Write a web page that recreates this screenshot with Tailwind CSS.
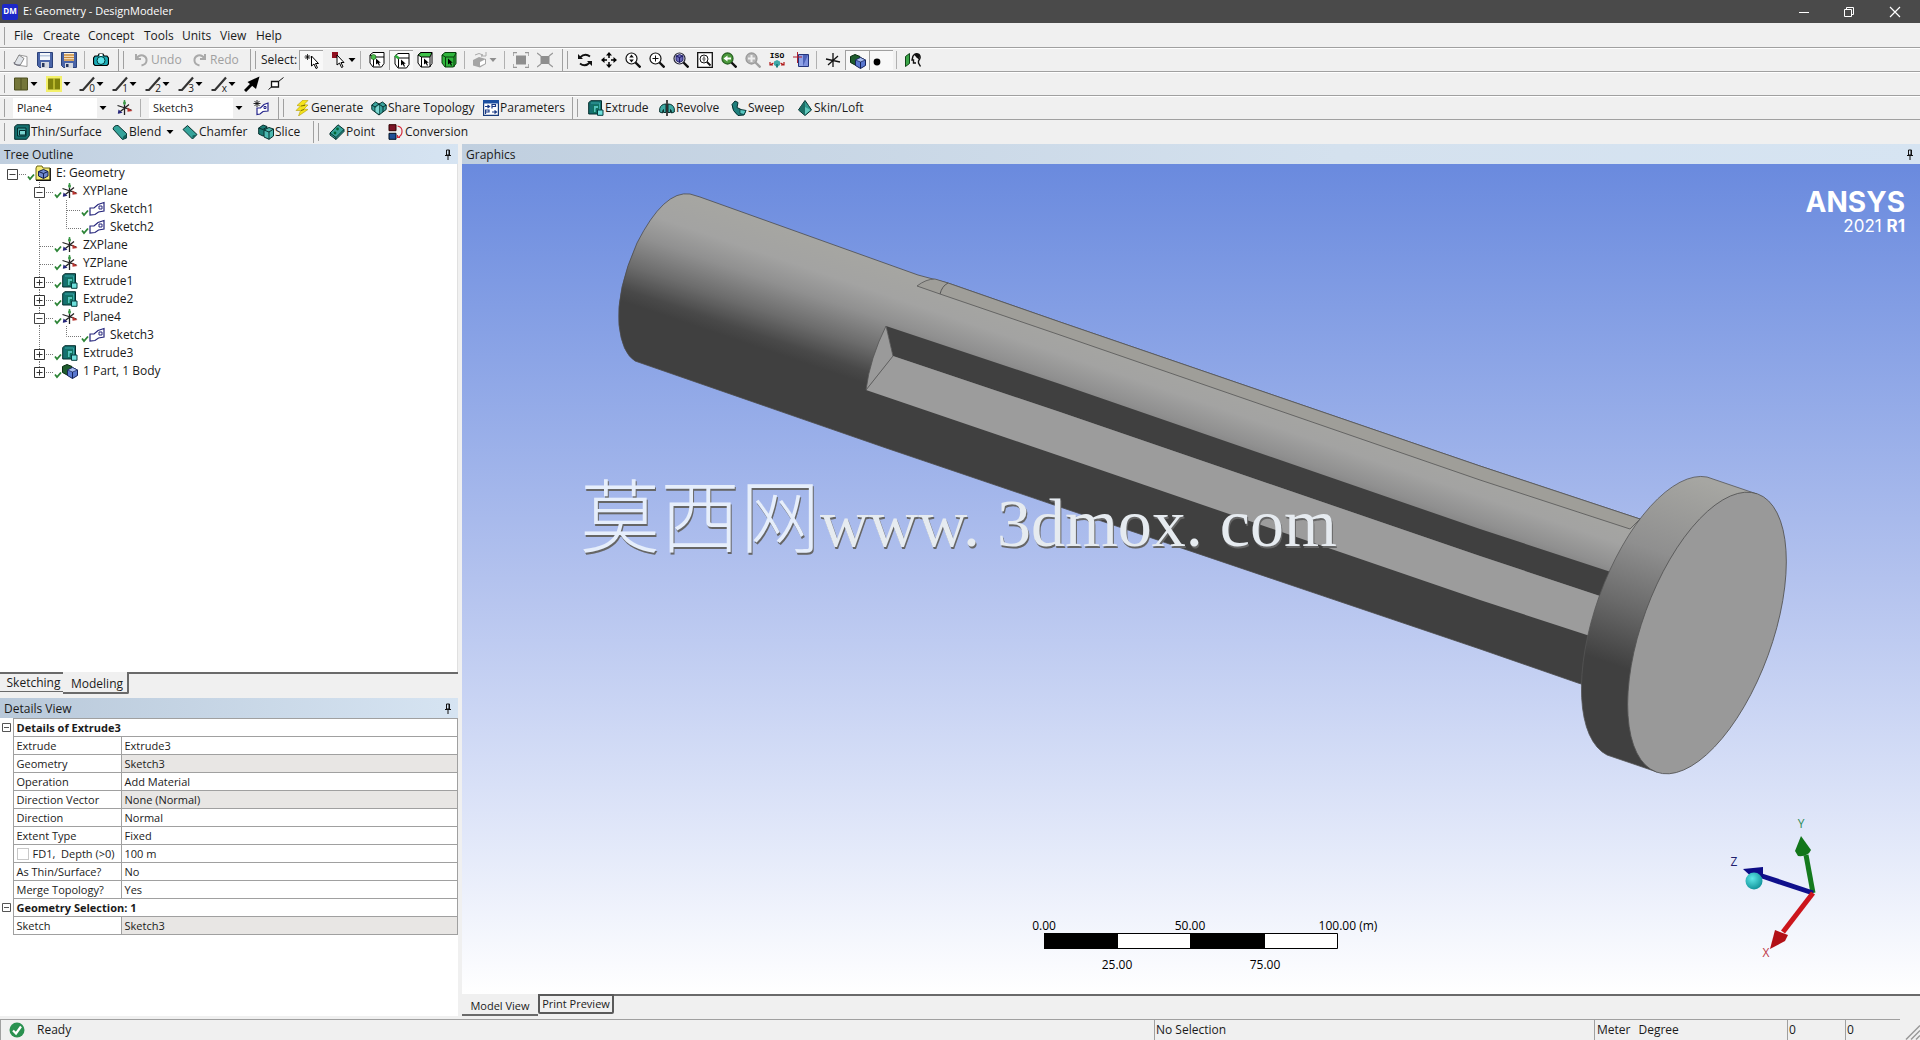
<!DOCTYPE html>
<html lang="en">
  <head>
    <meta charset="UTF-8" />
    <meta name="viewport" content="width=device-width, initial-scale=1.0" />
    <title>E: Geometry - DesignModeler</title>
    <script src="https://cdn.jsdelivr.net/npm/@tailwindcss/browser@4"></script>
  </head>
  <body
    class="flex h-screen flex-col overflow-hidden bg-[#f0f0f0] font-['Open_Sans','Noto_Sans_CJK_SC',sans-serif] text-xs text-[#1a1a1a]"
  >
    <!-- icon set -->
    <svg class="hidden">
      <symbol id="caret" viewBox="0 0 8 8"><path d="M0.5 2h7L4 6z" fill="#000" /></symbol>
      <symbol id="pin" viewBox="0 0 8 12">
        <path d="M2.5 1h3v5h-3zM1 6.5h6M4 7v4" fill="none" stroke="#111" /><path d="M4.5 1h1.5v5H4.500z" fill="#111" />
      </symbol>
      <symbol id="new" viewBox="0 0 16 16">
        <path d="M6 3l8 1.500v10l-7-1z" fill="#fff" stroke="#999" /><path d="M6 3L1 12l6 1.500 4-7z" fill="#dfe3e8" stroke="#8a8a8a" /><path d="M1 10q1 4 6 3" stroke="#667" fill="none" />
      </symbol>
      <symbol id="save" viewBox="0 0 16 16">
        <path d="M.5.5h15v15h-13l-2-2z" fill="#4a65a8" stroke="#2c4279" /><path d="M3 1h10v7H3z" fill="#f4f7fb" /><path d="M3 3h10v1.500H3z" fill="#b9c7dd" /><path d="M4 10h8v6H4z" fill="#d5d9e0" /><path d="M5 11h2.500v4H5z" fill="#26365c" />
      </symbol>
      <symbol id="saveas" viewBox="0 0 16 16">
        <path d="M.5.5h15v15h-13l-2-2z" fill="#4a65a8" stroke="#2c4279" /><path d="M3 1h10v8H3z" fill="#fff6e0" /><path d="M3 3h10M3 5.500h10M3 8h10" stroke="#c98a3a" stroke-width="1.300" /><path d="M4 11h8v5H4z" fill="#d5d9e0" /><path d="M5 12h2.500v3H5z" fill="#26365c" />
      </symbol>
      <symbol id="camera" viewBox="0 0 16 16">
        <path d="M2 4h3l1-2h4l1 2h3l1.500 2v6L14 13.500H2L.5 12V6z" fill="#19a9b4" stroke="#000" stroke-width="1.200" /><circle cx="8" cy="8.500" r="4" fill="#5fe4ea" stroke="#033" /><path d="M6.500 2h3v2h-3z" fill="#fff" />
      </symbol>
      <symbol id="undo" viewBox="0 0 16 16"><path d="M3 2v5h5M3.500 6.500Q6 2.500 10 3.500q4 1.500 3.500 5.500-.5 3.500-5 4.500" fill="none" stroke="#a9a9a9" stroke-width="2" /></symbol>
      <symbol id="redo" viewBox="0 0 16 16"><path d="M13 2v5H8M12.500 6.500Q10 2.500 6 3.500 2 5 2.500 9q.5 3.500 5 4.500" fill="none" stroke="#a9a9a9" stroke-width="2" /></symbol>
      <symbol id="pick" viewBox="0 0 16 16">
        <path d="M3.500 1v6M.5 4h6M1.500 2l4 4M5.500 2l-4 4" stroke="#000" stroke-width=".8" /><path d="M7.500 3v10l2.500-2 2 4.500 1.500-.7-2-4.300h3z" fill="#fff" stroke="#000" />
      </symbol>
      <symbol id="pickmode" viewBox="0 0 16 16">
        <path d="M1 0h6v6H1z" fill="#8f1020" /><path d="M6 3v10l2.500-2 2 4.500 1.500-.7-2-4.300h3z" fill="#fff" stroke="#000" />
      </symbol>
      <symbol id="cube-pt" viewBox="0 0 16 16">
        <path d="M1 3l3-2.500h11v11L12.500 15H4L1 11zM4.500 5H15M4.500 5v9.500M4.500 5L1 3" fill="#fff" stroke="#000" /><circle cx="4.500" cy="5" r="2.500" fill="#4fc04f" stroke="#0a500a" stroke-width=".6" /><path d="M7 6.500v6l1.700-1.200 1.300 2.500 1-.5-1.200-2.500h2z" fill="#000" />
      </symbol>
      <symbol id="cube-edge" viewBox="0 0 16 16">
        <path d="M1 3l3-2.500h11v11L12.500 15H4L1 11zM4.500 5H15M4.500 5v9.500" fill="#fff" stroke="#000" /><path d="M1 2.500l4 3" stroke="#2fae3a" stroke-width="2.500" /><path d="M7 6.500v6l1.700-1.200 1.300 2.500 1-.5-1.200-2.500h2z" fill="#000" />
      </symbol>
      <symbol id="cube-face" viewBox="0 0 16 16">
        <path d="M1 3l3-2.500h11v11L12.500 15H4L1 11z" fill="#fff" stroke="#000" /><path d="M1 3l3-2.500h11L13 5H4.500z" fill="#3fc24a" stroke="#000" /><path d="M4.500 5v10M13 5v10" stroke="#000" /><path d="M7 6.500v6l1.700-1.200 1.300 2.500 1-.5-1.200-2.500h2z" fill="#000" />
      </symbol>
      <symbol id="cube-body" viewBox="0 0 16 16">
        <path d="M1 3l3-2.500h11v11L12.500 15H4L1 11z" fill="#2fb53c" stroke="#063f0b" /><path d="M1 3l3.500 2H13l2-4M4.500 5v10M13 5v10" stroke="#063f0b" fill="none" /><path d="M7 6.500v6l1.700-1.200 1.300 2.500 1-.5-1.200-2.500h2z" fill="#000" />
      </symbol>
      <symbol id="cube-off" viewBox="0 0 16 16">
        <path d="M1 8l6-3 7 2v5l-6 3.500-7-2z" fill="#a5a5a5" /><path d="M8 10l5-2.500v4L8 14z" fill="#fff" /><path d="M3 3q4-3 8 0l-2 1h5V0" stroke="#aaa" fill="none" />
      </symbol>
      <symbol id="grow" viewBox="0 0 16 16"><path d="M3 3.500h10v9H3z" fill="#8e8e8e" /><path d="M0 4V.5h4M12 .5h4V4M16 12v3.500h-4M4 15.500H0V12" fill="none" stroke="#999" stroke-width="1.500" /></symbol>
      <symbol id="shrink" viewBox="0 0 16 16"><path d="M3.500 4h9v8h-9z" fill="#8e8e8e" /><path d="M0 1l4 3M16 1l-4 3M0 15l4-3M16 15l-4-3" stroke="#999" stroke-width="1.300" /></symbol>
      <symbol id="rotate" viewBox="0 0 16 16">
        <path d="M3 5.500Q8 .5 13 4.500M13 10.500Q8 15.500 3 11.500" fill="none" stroke="#111" stroke-width="1.800" /><path d="M1 2v5h5zM15 14V9h-5z" fill="#111" />
      </symbol>
      <symbol id="pan" viewBox="0 0 16 16"><path d="M8 2v4M8 10v4M2 8h4M10 8h4" stroke="#000" stroke-width="1.500" /><path d="M8 0l3 3.500H5zM8 16l3-3.500H5zM0 8l3.500-3v6zM16 8l-3.500-3v6z" fill="#000" /></symbol>
      <symbol id="zoom" viewBox="0 0 16 16"><circle cx="6.500" cy="6.500" r="5.500" fill="#fff" stroke="#111" stroke-width="1.200" /><path d="M10.500 10.500L15.500 15.500" stroke="#111" stroke-width="2.400" /><path d="M6.500 2.500l2.300 3H4.200zM6.500 10.500l2.300-3H4.200z" fill="#111" /></symbol>
      <symbol id="zoomin" viewBox="0 0 16 16"><circle cx="6.500" cy="6.500" r="5.500" fill="#fff" stroke="#111" stroke-width="1.200" /><path d="M10.500 10.500L15.500 15.500" stroke="#111" stroke-width="2.400" /><path d="M6.500 3.500v6M3.500 6.500h6" stroke="#111" /></symbol>
      <symbol id="zoomfit" viewBox="0 0 16 16"><circle cx="6.500" cy="6.500" r="5.500" fill="#fff" stroke="#223" stroke-width="1.200" /><path d="M10.500 10.500L15.500 15.500" stroke="#111" stroke-width="2.400" /><path d="M6.500 2.500l3.500 1.500v4.500L6.500 10.500 3 8.500V4z" fill="#6a68b8" stroke="#1c1a66" /><path d="M3 4l3.500 1.500L10 4M6.500 5.500v5" stroke="#1c1a66" fill="none" /></symbol>
      <symbol id="zoombox" viewBox="0 0 16 16"><path d="M.7.7h14.600v14.600H.7z" fill="#fff" stroke="#111" stroke-width="1.300" /><circle cx="7" cy="7" r="4" fill="none" stroke="#111" /><path d="M10 10l3.500 3.500" stroke="#111" stroke-width="1.800" /><path d="M7 4.500v1.500M7 8v1.500M5.500 7h3" stroke="#111" /></symbol>
      <symbol id="zoomprev" viewBox="0 0 16 16"><circle cx="6.500" cy="6.500" r="5.500" fill="#4c9a3c" stroke="#2a6424" stroke-width="1.300" /><path d="M10.500 10.500L15.500 15.500" stroke="#111" stroke-width="2.400" /><path d="M2.500 6.500l4-3v2h3.500v2H6.500v2z" fill="#fff" /></symbol>
      <symbol id="zoomnext" viewBox="0 0 16 16"><circle cx="6.500" cy="6.500" r="5.500" fill="#b4b4b4" stroke="#9a9a9a" stroke-width="1.300" /><path d="M10.500 10.500L15.500 15.500" stroke="#a0a0a0" stroke-width="2.400" /><path d="M6.500 3v7M3 6.500h7" stroke="#eee" stroke-width="2" /></symbol>
      <symbol id="iso" viewBox="0 0 16 16">
        <text x="8" y="6" text-anchor="middle" font-size="8" font-weight="700" font-family="Liberation Mono">ISO</text>
        <path d="M8 8l3 1.500v3.500L8 15l-3-2V9.500z" fill="#3fa8a8" /><path d="M8 12v3.500" stroke="#1f8080" stroke-width="2" /><path d="M4.500 11L1 13M1 10v3h3" stroke="#b01818" stroke-width="1.200" fill="none" /><path d="M11.500 11L15 13M15 10v3h-3" stroke="#b01818" stroke-width="1.200" fill="none" />
      </symbol>
      <symbol id="lookat" viewBox="0 0 16 16"><path d="M5.500 2.500h10v12h-10z" fill="#8fa2e6" stroke="#24357c" /><path d="M10 3h5v11h-5z" fill="#4d62b8" /><path d="M10 14l5-11v11z" fill="#7f92de" /><path d="M0 5h9M4.500 0v11" stroke="#b02030" /></symbol>
      <symbol id="axes-k" viewBox="0 0 16 16"><path d="M8 1v14M1 7l14 3M3 13L13 4" stroke="#111" stroke-width="1.300" /></symbol>
      <symbol id="parts" viewBox="0 0 16 16">
        <path d="M.5 3.500L5 1.500l5 2v7l-4 2-5.500-3z" fill="#1f5d2e" stroke="#0a2c12" /><path d="M5.500 7L10.500 4.500 15.500 7v5.500L10.500 15.500l-5-3z" fill="#5a78d0" stroke="#16235a" /><path d="M5.500 7l5 2 5-2-5-2.500z" fill="#a9bff2" stroke="#16235a" stroke-width=".7" /><path d="M10.500 9v6.500" stroke="#16235a" />
      </symbol>
      <symbol id="dot" viewBox="0 0 16 16"><circle cx="7" cy="9" r="3.400" fill="#000" /></symbol>
      <symbol id="person" viewBox="0 0 16 16"><path d="M.5 4.500l4-3v10l-4 3z" fill="#3ba648" stroke="#0f4517" /><path d="M8 4q2-3.500 6-1.500 2.500 3-.5 6.500v2l2 3.500M8 4l-1 4h1.500v3H11" fill="none" stroke="#111" stroke-width="1.400" /><path d="M9 2.500q4-2.500 6 1l-1 4-2.500-2z" fill="#111" /></symbol>
      <symbol id="face-a" viewBox="0 0 16 16"><path d="M1.500 2h13v12h-13z" fill="#74763a" stroke="#4d4f20" /><path d="M8 2v12" stroke="#4d4f20" /></symbol>
      <symbol id="face-b" viewBox="0 0 16 16"><path d="M0 0h16v16H0z" fill="#f3f06a" /><path d="M2 2.500h12v11H2z" fill="#80820c" /><path d="M8 2.500v11" stroke="#efe94a" /></symbol>
      <symbol id="edge" viewBox="0 0 16 16"><path d="M.5 14h3.500L15 1.500" fill="none" stroke="#333" stroke-width="2.200" /></symbol>
      <symbol id="arrow-dir" viewBox="0 0 16 16"><path d="M1 15L8 8" stroke="#000" stroke-width="3" /><path d="M15.500.5L12 13 3.500 6z" fill="#000" /></symbol>
      <symbol id="vertex" viewBox="0 0 16 16"><path d="M3.500 5.500h7v5.500h-7z" fill="#fff" stroke="#111" stroke-width="1.300" /><path d="M10.500 5.500L15.500 1.500M.5 13.500L3.500 11" stroke="#111" /></symbol>
      <symbol id="plane" viewBox="0 0 16 16"><path d="M7.500 1v14M.5 5.500l14 4.500M1.500 13L12 4.500" stroke="#222" stroke-width="1.300" /><path d="M7.500 5V0M6 3h3" stroke="#3a9a46" stroke-width="1.500" /><path d="M10.500 7.500l5 3.500-5 .8z" fill="#b8332e" /><path d="M.8 13.800l.7-4.300 4 3.300z" fill="#26267c" /></symbol>
      <symbol id="sketch" viewBox="0 0 16 16"><path d="M1 14V7h4L9 3.500l6-2v8.500L9.500 11 6 13.500z" fill="#fff" stroke="#26267c" stroke-width="1.200" /><path d="M10 5h3v3h-3z" fill="none" stroke="#26267c" /></symbol>
      <symbol id="newsketch" viewBox="0 0 16 16"><path d="M4 14.500V8h3.500L11 4.500l4-1.500v8l-5 .5-3 2.500z" fill="#fff" stroke="#26268c" stroke-width="1.200" /><path d="M11 6.500h2v2h-2z" fill="none" stroke="#26268c" /><path d="M4 0v7M.5 3.500h7M1.500 1l5 5M6.500 1l-5 5" stroke="#111" stroke-width=".9" /></symbol>
      <symbol id="extrude" viewBox="0 0 16 16"><path d="M.7 2.500L3 .7h10.500v11L11 14H.7z" fill="#15706f" stroke="#032c2c" /><path d="M3 3h8.500v9" fill="none" stroke="#39a5a3" /><path d="M5.500 5.500h5v3H8v4H5.500z" fill="#56c2be" stroke="#064" stroke-width=".7" /><path d="M9.500 10h5.500v5.300H9.500z" fill="#6fe0dc" stroke="#043c3c" /></symbol>
      <symbol id="bolt" viewBox="0 0 16 16"><path d="M9 0L3 5.500 6.500 6 2 10.500l4.500 0L4.500 16 14 9.500l-4-.5 4-4-4-.5L14 .5z" fill="#f5e41c" stroke="#b09a08" stroke-width=".6" /><path d="M7 6l4-.7M7 10.500l3-1" stroke="#7a6c00" /></symbol>
      <symbol id="share" viewBox="0 0 16 16"><path d="M.8 5l3.700-3L8 4l3.500-2 3.700 3v4.500L8 15 .8 9.500z" fill="#3aa39d" stroke="#06302e" /><path d="M.8 5L4 7l4-3 4 3 3.200-2M4 7v5M12 7v5M8 4v11" fill="none" stroke="#06302e" /><path d="M4.500 8L8 5v9l-3.500-2.500z" fill="#7cd6d0" /></symbol>
      <symbol id="params" viewBox="0 0 16 16"><path d="M.6.600h14.800v14.800H.6z" fill="#fff" stroke="#173b7c" stroke-width="1.200" /><path d="M0 0h16v3.500H0z" fill="#1c4fa0" /><path d="M2 6.500h4M4.500 5l2 1.500-2 1.500M9 8.500V4.500h3.500v2H9M2.500 14v-4H6v2H2.500M9 12h4M11.500 10.500l2 1.500-2 1.500" fill="none" stroke="#1a3a86" stroke-width="1.200" /></symbol>
      <symbol id="revolve" viewBox="0 0 16 16"><path d="M.7 8.500Q2 4 7 4v8.500H4.500V9.500Q3.500 9.500 3.500 13L.7 12zM15.300 8.500Q14 4 9 4v8.500h2.500V9.500q1 0 1 3.500l2.800-1z" fill="#3fa8a2" stroke="#06302e" /><path d="M8 0v16" stroke="#111" stroke-width="1.500" /></symbol>
      <symbol id="sweep" viewBox="0 0 16 16"><path d="M1 4.500L4 1l3 1.500-1 5 5 2.500 4 .5-2 4.500-6 .5Q1 11 1 4.500z" fill="#1f7f7c" stroke="#043030" /><path d="M9 9.500l6 1-2 4-4-1z" fill="#57c8c2" stroke="#043030" stroke-width=".7" /></symbol>
      <symbol id="loft" viewBox="0 0 16 16"><path d="M8 .5l3.500 5 3 4.500L8 15.500 1.500 10l3-4.500z" fill="#2f9a90" stroke="#06302e" /><path d="M8 1v14l-6-5 2.500-4z" fill="#1c6e66" /><path d="M8 7l5.500 3L8 14.500z" fill="#62c9bd" /></symbol>
      <symbol id="thin" viewBox="0 0 16 16"><path d="M.7 2.500L3 .7h12.300v11L12.500 15.300H.7z" fill="#15706f" stroke="#032c2c" /><path d="M3.500 4h8.500v8H3.500z" fill="#3fa3a0" stroke="#032c2c" /><path d="M5.500 6.500h6V11h-6z" fill="#7ad3cf" stroke="#032c2c" /></symbol>
      <symbol id="blend" viewBox="0 0 16 16"><path d="M1 5q1-4 5-3.500l8.500 8V14l-4 1.500z" fill="#35a39a" stroke="#06302e" /><path d="M10.500 15.500q0-4 4-5V14z" fill="#15605a" /></symbol>
      <symbol id="chamfer" viewBox="0 0 16 16"><path d="M1 5.500L5.500 1.500 15 10.500 10.500 15z" fill="#35a39a" stroke="#06302e" /><path d="M10.500 15v-3.500l4.500-1z" fill="#15605a" /></symbol>
      <symbol id="slice" viewBox="0 0 16 16"><path d="M.7 4L5 1l4 1.500v7L5 12 .7 10z" fill="#1c7d76" stroke="#06302e" /><path d="M6 6l5-2.500L15.500 5v7L11 15.300 6 13z" fill="#4db8b0" stroke="#06302e" /><path d="M6 6l5 2 4.500-3M11 8v7.300M.7 4L5 5.500 9 3" stroke="#06302e" fill="none" /></symbol>
      <symbol id="point" viewBox="0 0 16 16"><path d="M1 9L9 .8 15 5.500v2L7 15.500 1 11z" fill="#36a198" stroke="#06302e" /><path d="M1 9l6 4.500L15 5.500M7 13.500v2" stroke="#06302e" fill="none" /><circle cx="8.500" cy="5" r="1.400" fill="#063" /><circle cx="6" cy="9" r="1.400" fill="#063" /></symbol>
      <symbol id="convert" viewBox="0 0 16 16"><path d="M1 .7h7v6H1z" fill="#7c1426" stroke="#300" /><path d="M1 9.300h7v6H1z" fill="#1f4f96" stroke="#012" /><path d="M9.500 2q5 1 4.500 6-.3 4-4.500 5.500M12 13.500H9.500V11" fill="none" stroke="#d4293a" stroke-width="1.200" /></symbol>
      <symbol id="model" viewBox="0 0 16 16"><path d="M1 3l1-2h5l1 2h7v12H1z" fill="#f6ec74" stroke="#6b6410" /><path d="M15.300 3v12.300H1" stroke="#111" fill="none" stroke-width="1.200" /><path d="M3.500 6.500L8.500 4.500l4.500 2V11l-4.500 2.500-5-2.500z" fill="#6f88cf" stroke="#15204e" /><path d="M3.500 6.500l5 2 4.500-2M8.500 8.500v5" stroke="#15204e" fill="none" /></symbol>
      <symbol id="check" viewBox="0 0 8 18"><path d="M1 12.500l2 2.500L7 10.500" fill="none" stroke="#2c8436" stroke-width="1.800" /></symbol>
      <!-- tree guides, one 27x18 cell per indent level -->
      <symbol id="g-minus" viewBox="0 0 27 18"><path d="M12.500 0v5M12.500 15v3M19 10.500h8" stroke="#777" stroke-dasharray="1 1" /><path d="M7.500 5.500h10v10h-10zM9.500 10.500h6" fill="#fff" stroke="#444" /></symbol>
      <symbol id="g-root" viewBox="0 0 27 18"><path d="M19 10.500h8" stroke="#777" stroke-dasharray="1 1" /><path d="M7.500 5.500h10v10h-10zM9.500 10.500h6" fill="#fff" stroke="#444" /></symbol>
      <symbol id="g-plus" viewBox="0 0 27 18"><path d="M12.500 0v5M12.500 15v3M19 10.500h8" stroke="#777" stroke-dasharray="1 1" /><path d="M7.500 5.500h10v10h-10zM9.500 10.500h6M12.500 7.500v6" fill="#fff" stroke="#333" /></symbol>
      <symbol id="g-pluslast" viewBox="0 0 27 18"><path d="M12.500 0v5M19 10.500h8" stroke="#777" stroke-dasharray="1 1" /><path d="M7.500 5.500h10v10h-10zM9.500 10.500h6M12.500 7.500v6" fill="#fff" stroke="#333" /></symbol>
      <symbol id="g-line" viewBox="0 0 27 18"><path d="M12.500 0v18" stroke="#777" stroke-dasharray="1 1" /></symbol>
      <symbol id="g-tee" viewBox="0 0 27 18"><path d="M12.500 0v18M13 10.500h14" stroke="#777" stroke-dasharray="1 1" /></symbol>
      <symbol id="g-end" viewBox="0 0 27 18"><path d="M12.500 0v10.500h14.500" fill="none" stroke="#777" stroke-dasharray="1 1" /></symbol>
      <symbol id="g-none" viewBox="0 0 27 18"></symbol>
    </svg>

    <!-- title bar -->
    <header class="flex h-[23px] shrink-0 items-center bg-[#4a4a4a] text-white">
      <div class="ml-0.5 flex h-4 w-4 items-center justify-center rounded-xs bg-[#1c28c8] text-[8px] font-bold">DM</div>
      <h1 class="ml-[5px] grow text-[11px]">E: Geometry - DesignModeler</h1>
      <button class="flex h-full w-[45px] items-center justify-center" aria-label="Minimize">
        <svg class="h-3 w-3" viewBox="0 0 12 12"><path d="M1 6.500h10" stroke="#fff" /></svg>
      </button>
      <button class="flex h-full w-[46px] items-center justify-center" aria-label="Restore">
        <svg class="h-3 w-3" viewBox="0 0 12 12"><path d="M1.500 3.500h7v7h-7zM3.500 3V1.500h7v7H9" fill="none" stroke="#fff" /></svg>
      </button>
      <button class="flex h-full w-[46px] items-center justify-center" aria-label="Close">
        <svg class="h-3 w-3" viewBox="0 0 12 12"><path d="M1 1l10 10M11 1L1 11" stroke="#fff" stroke-width="1.200" /></svg>
      </button>
      <div class="w-0.5"></div>
    </header>

    <!-- menu -->
    <nav class="flex h-[25px] shrink-0 items-center border-b border-[#a0a0a0] pt-0.5 pl-1">
      <span class="mr-[9px] h-[18px] w-px bg-[#a0a0a0]"></span>
      <button class="w-[29px] text-left">File</button>
      <button class="w-[45px] text-left">Create</button>
      <button class="w-[56px] text-left">Concept</button>
      <button class="w-[38px] text-left">Tools</button>
      <button class="w-[38px] text-left">Units</button>
      <button class="w-[36px] text-left">View</button>
      <button class="text-left">Help</button>
    </nav>

    <!-- standard toolbar -->
    <div class="flex h-6 shrink-0 items-center border-b border-[#a0a0a0] border-t border-t-white pl-0.5">
      <span class="flex w-[7px] pl-0.5"><i class="h-[18px] w-px bg-[#a0a0a0]"></i></span>
      <button class="flex w-6 justify-center" aria-label="New"><svg class="size-4"><use href="#new" /></svg></button>
      <button class="flex w-6 justify-center" aria-label="Save"><svg class="size-4"><use href="#save" /></svg></button>
      <button class="flex w-6 justify-center" aria-label="Save As"><svg class="size-4"><use href="#saveas" /></svg></button>
      <span class="flex w-2 pl-[3px]"><i class="h-[18px] w-px bg-[#b0b0b0]"></i></span>
      <button class="flex w-6 justify-center" aria-label="Capture"><svg class="size-4"><use href="#camera" /></svg></button>
      <span class="flex w-4 items-center gap-1 pl-[5px]"><i class="h-[22px] w-px bg-[#a0a0a0]"></i><i class="h-[18px] w-px bg-[#a0a0a0]"></i></span>
      <button class="flex w-[59px] items-center gap-0.5 pl-1 text-[#a0a0a0]" disabled><svg class="size-4"><use href="#undo" /></svg>Undo</button>
      <button class="flex w-[57px] items-center gap-0.5 pl-1 text-[#a0a0a0]" disabled><svg class="size-4"><use href="#redo" /></svg>Redo</button>
      <span class="flex w-4 items-center gap-1 pl-[5px]"><i class="h-[22px] w-px bg-[#a0a0a0]"></i><i class="h-[18px] w-px bg-[#a0a0a0]"></i></span>
      <span class="w-[38px]">Select:</span>
      <button class="flex h-5 w-6 items-center justify-center border-t border-l border-[#a0a0a0] bg-[#f8f8f8]" aria-label="New selection"><svg class="size-4"><use href="#pick" /></svg></button>
      <button class="flex w-[34px] items-center gap-px pl-2" aria-label="Selection mode"><svg class="size-4"><use href="#pickmode" /></svg><svg class="size-2"><use href="#caret" /></svg></button>
      <span class="flex w-2 pl-[3px]"><i class="h-[18px] w-px bg-[#b0b0b0]"></i></span>
      <button class="flex w-6 justify-center" aria-label="Points"><svg class="size-4"><use href="#cube-pt" /></svg></button>
      <button class="flex h-5 w-6 items-center justify-center border-t border-l border-[#a0a0a0] bg-[#f8f8f8]" aria-label="Edges"><svg class="size-4"><use href="#cube-edge" /></svg></button>
      <button class="flex w-6 justify-center" aria-label="Faces"><svg class="size-4"><use href="#cube-face" /></svg></button>
      <button class="flex w-6 justify-center" aria-label="Bodies"><svg class="size-4"><use href="#cube-body" /></svg></button>
      <span class="flex w-2 pl-[3px]"><i class="h-[18px] w-px bg-[#b0b0b0]"></i></span>
      <button class="flex w-8 items-center gap-px pl-[3px]" aria-label="Extend" disabled><svg class="size-4"><use href="#cube-off" /></svg><svg class="size-2 opacity-40"><use href="#caret" /></svg></button>
      <span class="flex w-2 pl-[3px]"><i class="h-[18px] w-px bg-[#b0b0b0]"></i></span>
      <button class="flex w-6 justify-center" aria-label="Expand" disabled><svg class="size-4"><use href="#grow" /></svg></button>
      <button class="flex w-6 justify-center" aria-label="Shrink" disabled><svg class="size-4"><use href="#shrink" /></svg></button>
      <span class="flex w-4 items-center gap-1 pl-[5px]"><i class="h-[22px] w-px bg-[#a0a0a0]"></i><i class="h-[18px] w-px bg-[#a0a0a0]"></i></span>
      <button class="flex w-6 justify-center" aria-label="Rotate"><svg class="size-4"><use href="#rotate" /></svg></button>
      <button class="flex w-6 justify-center" aria-label="Pan"><svg class="size-4"><use href="#pan" /></svg></button>
      <button class="flex w-6 justify-center" aria-label="Zoom"><svg class="size-4"><use href="#zoom" /></svg></button>
      <button class="flex w-6 justify-center" aria-label="Box Zoom"><svg class="size-4"><use href="#zoomin" /></svg></button>
      <button class="flex w-6 justify-center" aria-label="Zoom to Fit"><svg class="size-4"><use href="#zoomfit" /></svg></button>
      <button class="flex w-6 justify-center" aria-label="Magnifier"><svg class="size-4"><use href="#zoombox" /></svg></button>
      <button class="flex w-6 justify-center" aria-label="Previous View"><svg class="size-4"><use href="#zoomprev" /></svg></button>
      <button class="flex w-6 justify-center" aria-label="Next View" disabled><svg class="size-4"><use href="#zoomnext" /></svg></button>
      <button class="flex w-6 justify-center" aria-label="Isometric"><svg class="size-4"><use href="#iso" /></svg></button>
      <button class="flex w-6 justify-center" aria-label="Look At"><svg class="size-4"><use href="#lookat" /></svg></button>
      <span class="flex w-2 pl-[3px]"><i class="h-[18px] w-px bg-[#b0b0b0]"></i></span>
      <button class="flex w-6 justify-center" aria-label="Display Plane"><svg class="size-4"><use href="#axes-k" /></svg></button>
      <button class="flex h-5 w-6 items-center justify-center border-t border-l border-[#a0a0a0] bg-[#f8f8f8]" aria-label="Display Model"><svg class="size-4"><use href="#parts" /></svg></button>
      <button class="flex h-5 w-6 items-center border-t border-l border-[#a0a0a0] bg-[#f8f8f8]" aria-label="Display Points"><svg class="size-4"><use href="#dot" /></svg></button>
      <span class="flex w-2 pl-[3px]"><i class="h-[18px] w-px bg-[#b0b0b0]"></i></span>
      <button class="flex w-6 justify-center" aria-label="Look At Face"><svg class="size-4"><use href="#person" /></svg></button>
    </div>

    <!-- display toolbar -->
    <div class="flex h-6 shrink-0 items-center border-b border-[#a0a0a0] border-t border-t-white pl-0.5">
      <span class="flex w-[7px] pl-0.5"><i class="h-[18px] w-px bg-[#a0a0a0]"></i></span>
      <button class="flex w-[33px] items-center gap-px pl-1" aria-label="Face color"><svg class="size-4"><use href="#face-a" /></svg><svg class="size-2"><use href="#caret" /></svg></button>
      <button class="flex w-[33px] items-center gap-px pl-1" aria-label="Face highlight"><svg class="size-4"><use href="#face-b" /></svg><svg class="size-2"><use href="#caret" /></svg></button>
      <button class="flex w-[33px] items-center gap-px pl-1"><span class="relative size-4"><svg class="size-4"><use href="#edge" /></svg><b class="absolute right-0 -bottom-0.5 text-[10px] leading-3 font-normal">0</b></span><svg class="size-2"><use href="#caret" /></svg></button>
      <button class="flex w-[33px] items-center gap-px pl-1"><span class="relative size-4"><svg class="size-4"><use href="#edge" /></svg><b class="absolute right-0 -bottom-0.5 text-[10px] leading-3 font-normal">1</b></span><svg class="size-2"><use href="#caret" /></svg></button>
      <button class="flex w-[33px] items-center gap-px pl-1"><span class="relative size-4"><svg class="size-4"><use href="#edge" /></svg><b class="absolute right-0 -bottom-0.5 text-[10px] leading-3 font-normal">2</b></span><svg class="size-2"><use href="#caret" /></svg></button>
      <button class="flex w-[33px] items-center gap-px pl-1"><span class="relative size-4"><svg class="size-4"><use href="#edge" /></svg><b class="absolute right-0 -bottom-0.5 text-[10px] leading-3 font-normal">3</b></span><svg class="size-2"><use href="#caret" /></svg></button>
      <button class="flex w-[33px] items-center gap-px pl-1"><span class="relative size-4"><svg class="size-4"><use href="#edge" /></svg><b class="absolute right-0 -bottom-0.5 text-[10px] leading-3 font-normal">x</b></span><svg class="size-2"><use href="#caret" /></svg></button>
      <button class="flex w-6 justify-center" aria-label="Edge direction"><svg class="size-4"><use href="#arrow-dir" /></svg></button>
      <button class="flex w-6 justify-center" aria-label="Vertices"><svg class="size-4"><use href="#vertex" /></svg></button>
    </div>

    <!-- plane / sketch + features -->
    <div class="flex h-6 shrink-0 items-center border-b border-[#a0a0a0] border-t border-t-white pl-0.5">
      <span class="flex w-[7px] pl-0.5"><i class="h-[18px] w-px bg-[#a0a0a0]"></i></span>
      <label class="flex w-[104px] items-center gap-0.5 pl-1">
        <select class="h-5 w-[84px] appearance-none bg-white pl-1 text-[11px]" aria-label="Active plane"><option>Plane4</option></select>
        <svg class="size-2"><use href="#caret" /></svg>
      </label>
      <button class="flex w-6 justify-center" aria-label="New Plane"><svg class="size-4"><use href="#plane" /></svg></button>
      <span class="flex w-2 pl-[3px]"><i class="h-[18px] w-px bg-[#b0b0b0]"></i></span>
      <label class="flex w-[104px] items-center gap-0.5 pl-1">
        <select class="h-5 w-[84px] appearance-none bg-white pl-1 text-[11px]" aria-label="Active sketch"><option>Sketch3</option></select>
        <svg class="size-2"><use href="#caret" /></svg>
      </label>
      <button class="flex w-6 justify-center" aria-label="New Sketch"><svg class="size-4"><use href="#newsketch" /></svg></button>
      <span class="flex w-4 items-center gap-1 pl-[5px]"><i class="h-[22px] w-px bg-[#a0a0a0]"></i><i class="h-[18px] w-px bg-[#a0a0a0]"></i></span>
      <button class="flex w-[77px] items-center gap-px pl-[5px]"><svg class="size-4 shrink-0"><use href="#bolt" /></svg>Generate</button>
      <button class="flex w-[112px] items-center gap-px pl-[5px] whitespace-nowrap"><svg class="size-4 shrink-0"><use href="#share" /></svg>Share Topology</button>
      <button class="flex w-[89px] items-center gap-px pl-[5px]"><svg class="size-4 shrink-0"><use href="#params" /></svg>Parameters</button>
      <span class="flex w-4 items-center gap-1 pl-[5px]"><i class="h-[22px] w-px bg-[#a0a0a0]"></i><i class="h-[18px] w-px bg-[#a0a0a0]"></i></span>
      <button class="flex w-[71px] items-center gap-px pl-[5px]"><svg class="size-4 shrink-0"><use href="#extrude" /></svg>Extrude</button>
      <button class="flex w-[72px] items-center gap-px pl-[5px]"><svg class="size-4 shrink-0"><use href="#revolve" /></svg>Revolve</button>
      <button class="flex w-[66px] items-center gap-px pl-[5px]"><svg class="size-4 shrink-0"><use href="#sweep" /></svg>Sweep</button>
      <button class="flex items-center gap-px pl-[5px]"><svg class="size-4 shrink-0"><use href="#loft" /></svg>Skin/Loft</button>
    </div>
    <div class="flex h-6 shrink-0 items-center pl-0.5">
      <span class="flex w-[7px] pl-0.5"><i class="h-[18px] w-px bg-[#a0a0a0]"></i></span>
      <button class="flex w-[98px] items-center gap-px pl-[5px]"><svg class="size-4 shrink-0"><use href="#thin" /></svg>Thin/Surface</button>
      <button class="flex w-[70px] items-center gap-px pl-[5px]"><svg class="size-4 shrink-0"><use href="#blend" /></svg>Blend<svg class="ml-1 size-2"><use href="#caret" /></svg></button>
      <button class="flex w-[76px] items-center gap-px pl-[5px]"><svg class="size-4 shrink-0"><use href="#chamfer" /></svg>Chamfer</button>
      <button class="flex w-[55px] items-center gap-px pl-[5px]"><svg class="size-4 shrink-0"><use href="#slice" /></svg>Slice</button>
      <span class="flex w-4 items-center gap-1 pl-[5px]"><i class="h-[22px] w-px bg-[#a0a0a0]"></i><i class="h-[18px] w-px bg-[#a0a0a0]"></i></span>
      <button class="flex w-[59px] items-center gap-px pl-[5px]"><svg class="size-4 shrink-0"><use href="#point" /></svg>Point</button>
      <button class="flex items-center gap-px pl-[5px]"><svg class="size-4 shrink-0"><use href="#convert" /></svg>Conversion</button>
    </div>

    <main class="flex min-h-0 grow">
      <!-- left column -->
      <div class="mr-1 flex w-[458px] shrink-0 flex-col">
        <section class="flex min-h-0 flex-[554_1_0%] flex-col">
          <h2 class="flex h-5 shrink-0 items-center justify-between bg-linear-to-r from-[#c0cfdf] to-[#d6e4f2] pt-0.5 pr-1.5 pl-1">
            Tree Outline <svg class="h-3 w-2"><use href="#pin" /></svg>
          </h2>
          <ul id="tree" class="grow border-r border-[#e0e0e0] bg-white"></ul>
          <div class="flex h-[26px] shrink-0 items-start">
            <button class="h-5 w-[63px] border-t-2 border-b border-[#6a6a6a] pl-1 text-center">Sketching</button>
            <button class="h-[22px] w-[66px] rounded-br-xs border-r-2 border-b-2 border-[#6a6a6a] pt-1 pl-1 text-center leading-4">Modeling</button>
            <span class="grow border-t-2 border-[#6a6a6a]"></span>
          </div>
        </section>
        <section class="flex min-h-0 flex-[318_1_0%] flex-col bg-white">
          <h2 class="flex h-5 shrink-0 items-center justify-between bg-linear-to-r from-[#b9c9da] to-[#d6e4f2] pt-0.5 pr-1.5 pl-1">
            Details View <svg class="h-3 w-2"><use href="#pin" /></svg>
          </h2>
          <table class="w-full table-fixed border-collapse text-[11px] leading-4">
            <colgroup>
              <col class="w-[13px]" />
              <col class="w-[108px]" />
              <col />
            </colgroup>
            <tbody id="details"></tbody>
          </table>
        </section>
      </div>

      <!-- graphics -->
      <section class="flex min-w-0 grow flex-col">
        <h2 class="flex h-5 shrink-0 items-center justify-between bg-linear-to-r from-[#c0cfdf] via-[#d4e1ee] via-60% to-[#d6e4f2] pt-0.5 pr-1.5 pl-1">
          Graphics <svg class="h-3 w-2"><use href="#pin" /></svg>
        </h2>
        <div class="relative grow bg-linear-to-b from-[#6a8ade] via-[#b3c2ee] to-white">
          <svg class="absolute inset-0 h-full w-full font-['Open_Sans']" viewBox="462 164 1458 830">
            <defs>
              <linearGradient id="shaft" gradientUnits="userSpaceOnUse" x1="837" y1="246" x2="798" y2="361">
                <stop offset="0" stop-color="#a6a6a2" /><stop offset=".25" stop-color="#a3a3a2" /><stop offset=".45" stop-color="#909090" />
                <stop offset=".7" stop-color="#6c6c6c" /><stop offset=".9" stop-color="#494949" /><stop offset="1" stop-color="#404040" />
              </linearGradient>
              <linearGradient id="rim" gradientUnits="userSpaceOnUse" x1="1695" y1="478" x2="1630" y2="670">
                <stop offset="0" stop-color="#a6a6a2" /><stop offset=".4" stop-color="#8f8f8f" /><stop offset=".7" stop-color="#6a6a6a" /><stop offset="1" stop-color="#404040" />
              </linearGradient>
              <radialGradient id="ball" cx=".4" cy=".35" r=".7"><stop offset="0" stop-color="#5fe8e8" /><stop offset="1" stop-color="#0d8f96" /></radialGradient>
            </defs>
            <!-- shaft -->
            <path d="M700 197L918 275 948 283 1060 322 1480 466 1640 519 1600 690 1578 683 1480 649 1060 507 886 448 635 361Q622 353 619 325 616 290 637 243 664 190 690 194z" fill="url(#shaft)" stroke="#4c4c4c" stroke-width=".8" />
            <path d="M917 286Q926 279 935 279L948 283 1060 322 1480 466 1640 519 1630 529 1480 480 1060 335 940 294z" fill="#9f9e99" stroke="#555" stroke-width=".8" />
            <path d="M940 294q2-8 8-11" fill="none" stroke="#555" />
            <path d="M886 326L1060 384 1480 529 1620 575 1600 596 1480 556 1060 412 893 356z" fill="#404040" />
            <path d="M893 356L1060 412 1480 556 1600 596 1590 636 1480 600 1060 456 866 390z" fill="#9c9c9c" />
            <path d="M886 326L893 356 866 390Q870 358 886 326z" fill="#9a9a9a" stroke="#555" stroke-width=".8" />
            <!-- flange -->
            <path d="M1707 477A148 65 -70 0 0 1607 755L1657 772 1757 494z" fill="url(#rim)" stroke="#555" stroke-width=".8" />
            <ellipse cx="1707" cy="633" rx="148" ry="65" transform="rotate(-70 1707 633)" fill="#999" stroke="#555" stroke-width=".8" />
            <!-- scale bar -->
            <g font-size="12" text-anchor="middle">
              <text x="1044" y="930">0.00</text><text x="1190" y="930">50.00</text><text x="1348" y="930">100.00 (m)</text>
              <text x="1117" y="969">25.00</text><text x="1265" y="969">75.00</text>
            </g>
            <path d="M1044.500 933.500h293v15h-293z" fill="#fff" stroke="#000" />
            <path d="M1044 933h74v16h-74zM1190 933h75v16h-75z" />
            <!-- triad -->
            <path d="M1813 893L1806 855" stroke="#157a1e" stroke-width="5" /><path d="M1801 836L1811 850Q1808 857 1798 856L1795 851z" fill="#12761a" />
            <path d="M1813 893L1762 876" stroke="#10108c" stroke-width="5" /><path d="M1743 869L1763 867V877L1755 880z" fill="#0c0c86" />
            <path d="M1813 893L1783 932" stroke="#cc161c" stroke-width="5" /><path d="M1770 949L1775 930 1788 935 1785 941z" fill="#b21016" />
            <circle cx="1754" cy="881" r="8.500" fill="url(#ball)" />
            <g font-size="12" text-anchor="middle">
              <text x="1801" y="828" fill="#2e8b57">Y</text><text x="1734" y="866" fill="#20206e">Z</text><text x="1766" y="957" fill="#c03a48">X</text>
            </g>
            <text x="580" y="546" font-size="80" font-weight="300" class="font-['Noto_Sans_CJK_SC'] drop-shadow-[1px_2px_0_#666]" fill="#e6eefb">莫西网</text>
            <text x="820" y="546" font-size="68" class="font-['Liberation_Serif'] drop-shadow-[1px_2px_0_#666]" fill="#e6ebf0">www. 3dmox. com</text>
          </svg>
          <div class="absolute top-6 right-[15px] text-right font-['Inter'] text-white">
            <p class="text-[28px] leading-7 font-bold">ANSYS</p>
            <p class="text-[17px] leading-5">2021 <b>R1</b></p>
          </div>
        </div>
        <div class="flex h-[22px] shrink-0 items-start text-[11px]">
          <button class="h-[22px] w-[76px] border-b-2 border-[#6a6a6a] pt-1 leading-4">Model View</button>
          <button class="h-5 w-[76px] rounded-b-xs border-2 border-[#5a5a5a] leading-4 whitespace-nowrap">Print Preview</button>
          <span class="grow border-t-2 border-[#6a6a6a]"></span>
        </div>
      </section>
    </main>

    <!-- status bar -->
    <footer class="mt-[3px] flex h-[21px] shrink-0 items-stretch leading-5">
      <div class="flex grow items-center gap-3 border-t border-l border-[#a0a0a0] pl-2">
        <svg class="size-4" viewBox="0 0 16 16"><circle cx="8" cy="8" r="7.500" fill="#2a9150" /><path d="M4 8.500l3 3L12 4.500" fill="none" stroke="#fff" stroke-width="2.200" /></svg>
        Ready
      </div>
      <div class="w-[440px] border-t border-l border-[#a0a0a0] pl-px">No Selection</div>
      <div class="flex w-[193px] gap-2 border-t border-l border-[#a0a0a0] pl-0.5"><span>Meter</span><span>Degree</span></div>
      <div class="w-[58px] border-t border-l border-[#a0a0a0] pl-px">0</div>
      <div class="w-[55px] border-t border-l border-[#a0a0a0] pl-px">0</div>
      <svg class="h-full w-5" viewBox="0 0 20 20"><path d="M6 20L20 6M11 20l9-9M16 20l4-4" stroke="#999" stroke-width="1.500" /></svg>
    </footer>

    <script>
      // guides: one cell per indent level, left to right
      const tree = [
        { guides: ["root"], icon: "model", text: "E: Geometry" },
        { guides: ["none", "minus"], icon: "plane", text: "XYPlane" },
        { guides: ["none", "line", "tee"], icon: "sketch", text: "Sketch1" },
        { guides: ["none", "line", "end"], icon: "sketch", text: "Sketch2" },
        { guides: ["none", "tee"], icon: "plane", text: "ZXPlane" },
        { guides: ["none", "tee"], icon: "plane", text: "YZPlane" },
        { guides: ["none", "plus"], icon: "extrude", text: "Extrude1" },
        { guides: ["none", "plus"], icon: "extrude", text: "Extrude2" },
        { guides: ["none", "minus"], icon: "plane", text: "Plane4" },
        { guides: ["none", "line", "end"], icon: "sketch", text: "Sketch3" },
        { guides: ["none", "plus"], icon: "extrude", text: "Extrude3" },
        { guides: ["none", "pluslast"], icon: "parts", text: "1 Part, 1 Body" },
      ];

      document.getElementById("tree").innerHTML = tree
        .map(
          (row) => `
          <li class="flex h-[18px] items-center">
            ${row.guides.map((g) => `<svg class="h-[18px] w-[27px]"><use href="#g-${g}" /></svg>`).join("")}
            <svg class="h-[18px] w-2"><use href="#check" /></svg>
            <svg class="size-4"><use href="#${row.icon}" /></svg>
            <span class="ml-[5px]">${row.text}</span>
          </li>`
        )
        .join("");

      const details = [
        { group: "Details of Extrude3" },
        { name: "Extrude", value: "Extrude3" },
        { name: "Geometry", value: "Sketch3", readonly: true },
        { name: "Operation", value: "Add Material" },
        { name: "Direction Vector", value: "None (Normal)", readonly: true },
        { name: "Direction", value: "Normal" },
        { name: "Extent Type", value: "Fixed" },
        { name: "FD1,&nbsp; Depth (&gt;0)", value: "100 m", check: true },
        { name: "As Thin/Surface?", value: "No" },
        { name: "Merge Topology?", value: "Yes" },
        { group: "Geometry Selection: 1" },
        { name: "Sketch", value: "Sketch3", readonly: true },
      ];

      const expander = `<svg class="mx-auto size-[9px]" viewBox="0 0 9 9"><path d="M.5.5h8v8h-8zM2 4.500h5" fill="none" stroke="#555" /></svg>`;

      document.getElementById("details").innerHTML = details
        .map((row) =>
          row.group
            ? `<tr class="h-[18px]">
                <td class="p-0">${expander}</td>
                <th colspan="2" class="border border-[#a0a0a0] py-0 pl-[3px] text-left font-bold">${row.group}</th>
              </tr>`
            : `<tr class="h-[18px]">
                <td class="p-0"></td>
                <td class="border border-[#a0a0a0] py-0 pl-[3px] whitespace-nowrap">${
                  row.check
                    ? `<label class="flex items-center gap-1"><input type="checkbox" class="size-3 appearance-none border border-[#c8c8c8] bg-white" />${row.name}</label>`
                    : row.name
                }</td>
                <td class="border border-[#a0a0a0] py-0 pl-[3px] ${row.readonly ? "bg-[#e8e6e4]" : "bg-white"}">${row.value}</td>
              </tr>`
        )
        .join("");
    </script>
  </body>
</html>
